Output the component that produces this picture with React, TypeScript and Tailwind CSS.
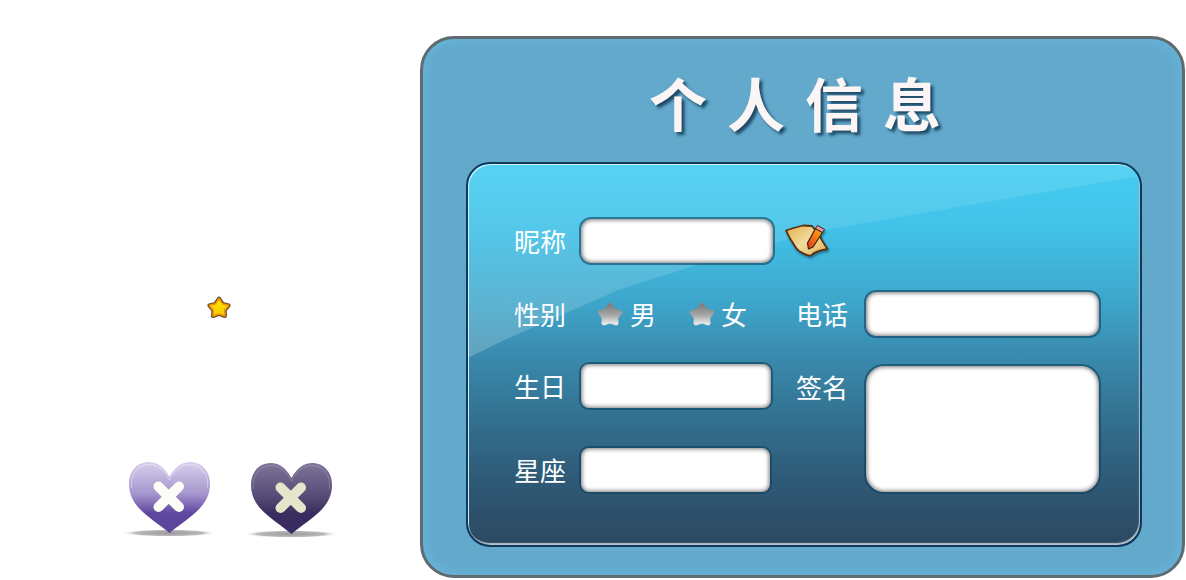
const cjk = "font-['Noto_Sans_CJK_SC','Noto_Sans',sans-serif]";
const fieldClass =
  'block border-2 border-[#0d3f5e]/60 bg-white bg-clip-padding shadow-[inset_0_0_4px_1px_#777777] outline-none';

function Star({ gray = false }: { gray?: boolean }) {
  const id = gray ? 'starGray' : 'starGold';
  const shape =
    'M13 3.5 L16.6 8.9 L22.6 10.4 L18.6 15.3 L19 21 L13 18.9 L7 21 L7.4 15.3 L3.4 10.4 L9.4 8.9 Z';
  return (
    <svg width="26" height="25" viewBox="0 0 26 25" className="block shrink-0">
      <defs>
        <linearGradient id={id} x1="0" y1="0" x2="0" y2="1">
          {gray ? (
            <>
              <stop offset="0%" stopColor="#808080" />
              <stop offset="55%" stopColor="#a6a6a6" />
              <stop offset="100%" stopColor="#e4e4e4" />
            </>
          ) : (
            <>
              <stop offset="0%" stopColor="#ffe800" />
              <stop offset="100%" stopColor="#fbc800" />
            </>
          )}
        </linearGradient>
      </defs>
      {gray ? (
        <path d={shape} fill={`url(#${id})`} stroke={`url(#${id})`} strokeWidth="5" strokeLinejoin="round" />
      ) : (
        <>
          <path d={shape} fill="#f09a00" stroke="#6e4a2a" strokeWidth="4" strokeLinejoin="round" />
          <path d={shape} fill={`url(#${id})`} stroke="#f09a00" strokeWidth="1.6" strokeLinejoin="round" />
        </>
      )}
    </svg>
  );
}

function Heart({ dark = false }: { dark?: boolean }) {
  const id = dark ? 'heartDark' : 'heartLight';
  return (
    <svg width="98" height="82" viewBox="0 0 98 82" className="block shrink-0">
      <defs>
        <linearGradient id={id} x1="0" y1="0" x2="0" y2="1">
          {dark ? (
            <>
              <stop offset="0%" stopColor="#7f7499" />
              <stop offset="45%" stopColor="#584d78" />
              <stop offset="72%" stopColor="#3a2c5e" />
              <stop offset="100%" stopColor="#3a2b60" />
            </>
          ) : (
            <>
              <stop offset="0%" stopColor="#d8d0ec" />
              <stop offset="45%" stopColor="#a595cd" />
              <stop offset="72%" stopColor="#5e479f" />
              <stop offset="100%" stopColor="#5a4498" />
            </>
          )}
        </linearGradient>
        <radialGradient id={`${id}Shadow`}>
          <stop offset="0%" stopColor="#999999" />
          <stop offset="70%" stopColor="#b8b8b8" />
          <stop offset="100%" stopColor="#ffffff" stopOpacity="0" />
        </radialGradient>
      </defs>
      <ellipse cx="49" cy="75" rx="48" ry="3.8" fill={`url(#${id}Shadow)`} />
      <path
        d="M49.5 19 C44 9 37 4 29 4 C17 4 9 13 9 26 C9 50 32 60 49.5 75 C67 60 90 50 90 26 C90 13 82 4 70 4 C62 4 55 9 49.5 19 Z"
        fill={`url(#${id})`}
      />
      <path
        d="M11.5 30 C10 16 18 6.5 29 6.5 C37 6.5 44 11 49.5 22 C55 11 62 6.5 70 6.5 C81 6.5 89 16 87.5 30"
        fill="none"
        stroke="#ffffff"
        strokeOpacity={dark ? 0.18 : 0.4}
        strokeWidth="1"
      />
      <path
        d="M38.5 28.5 L59 49 M59 28.5 L38.5 49"
        stroke={dark ? '#e4e6cc' : '#fdfdf8'}
        strokeWidth="10"
        strokeLinecap="round"
      />
    </svg>
  );
}

function ScrollPencil() {
  return (
    <svg width="44" height="34" viewBox="0 0 44 34" className="block shrink-0 drop-shadow-[1px_2px_1px_rgba(0,40,70,0.45)]">
      <defs>
        <linearGradient id="paper" x1="0" y1="0" x2="1" y2="1">
          <stop offset="0%" stopColor="#e6ae4c" />
          <stop offset="50%" stopColor="#f0dca0" />
          <stop offset="100%" stopColor="#e4ae50" />
        </linearGradient>
        <linearGradient id="pencil" x1="0" y1="1" x2="1" y2="0">
          <stop offset="0%" stopColor="#e8341c" />
          <stop offset="100%" stopColor="#fbb316" />
        </linearGradient>
      </defs>
      <path
        d="M1 6.5 C6 4.5 12 3 18 1.5 L27 2 L34 11 L38 18 L42.5 25 C36 26 30 27 26 31.5 C22 32 18 29 14 27 C10 24 9 20 6 16 C4 13 3 10 1 6.5 Z"
        fill="url(#paper)"
        stroke="#5a300c"
        strokeWidth="1.8"
        strokeLinejoin="round"
      />
      <path d="M30.5 4.5 L37.5 8.5 L28 23 L23.5 25 L22.5 19 Z" fill="url(#pencil)" stroke="#3e2412" strokeWidth="1.2" strokeLinejoin="round" />
      <path d="M30.5 4.5 L32.5 1.5 L39.5 5.5 L37.5 8.5 Z" fill="#ee9aa8" stroke="#3e2412" strokeWidth="1" strokeLinejoin="round" />
    </svg>
  );
}

function Label({ children }: { children: string }) {
  return <span className="block w-[53px] shrink-0 text-[26px] leading-none whitespace-nowrap text-white">{children}</span>;
}

export default function App() {
  return (
    <div className={`flex min-h-[580px] w-[1186px] overflow-hidden bg-white ${cjk}`}>
      {/* 左侧图标 */}
      <div className="w-[420px] shrink-0 pt-[295px]">
        <div className="pl-[206px]">
          <Star />
        </div>
        <div className="mt-[138px] flex items-start gap-[24px] pl-[120px]">
          <Heart />
          <div className="mt-[1px]">
            <Heart dark />
          </div>
        </div>
      </div>

      {/* 个人信息面板 */}
      <div className="mt-[36px] flex h-[542px] w-[765px] shrink-0 flex-col rounded-[34px] border-[3px] border-[#5f6b70] bg-[#63a9cc] shadow-[inset_0_0_14px_#6ab8de]">
        <h1 className="flex h-[123px] shrink-0 items-start justify-center pt-[28px] pl-[5px] text-[58px] leading-[70px] font-bold tracking-[20px] text-[#fbf6f5] [text-shadow:3px_3px_3px_#1d4a66]">
          个人信息
        </h1>

        <div className="relative ml-[43px] h-[385px] w-[676px] overflow-hidden rounded-[24px] border-2 border-[#0e3a5e] bg-[linear-gradient(180deg,#44cdf2_0%,#42c2e8_17%,#3ea6cb_36%,#3a8db0_49%,#33708f_67%,#2e5a77_83%,#2c4860_100%)] shadow-[inset_1px_1px_0_#cfeef8,inset_-1px_-2px_1px_#b4c0c8]">
          <div className="absolute inset-0 bg-[linear-gradient(180deg,rgba(255,255,255,0.1),rgba(255,255,255,0.1)_20%,rgba(255,255,255,0.2)_50%)] [clip-path:polygon(2px_193px,32px_178px,150px_126px,250px_94px,355px_66px,665px_13px,672px_12px,672px_0,0_0,0_193px)]" />

          <div className="relative flex flex-col pt-[53px] pl-[46px]">
            <div className="flex items-center">
              <Label>昵称</Label>
              <input className={`ml-[12px] h-[48px] w-[196px] rounded-[12px] ${fieldClass}`} />
              <div className="ml-[10px]">
                <ScrollPencil />
              </div>
            </div>

            <div className="mt-[25px] flex items-start">
              <div className="flex w-[282px] shrink-0 flex-col">
                <div className="flex h-[48px] items-center">
                  <Label>性别</Label>
                  <div className="ml-[30px]">
                    <Star gray />
                  </div>
                  <span className="ml-[7px] text-[26px] leading-none text-white">男</span>
                  <div className="ml-[33px]">
                    <Star gray />
                  </div>
                  <span className="ml-[6px] text-[26px] leading-none text-white">女</span>
                </div>
                <div className="mt-[24px] flex items-center">
                  <Label>生日</Label>
                  <input className={`ml-[12px] h-[48px] w-[194px] rounded-[10px] ${fieldClass}`} />
                </div>
                <div className="mt-[36px] flex items-center">
                  <Label>星座</Label>
                  <input className={`ml-[12px] h-[48px] w-[193px] rounded-[10px] ${fieldClass}`} />
                </div>
              </div>

              <div className="flex flex-col">
                <div className="flex items-center">
                  <Label>电话</Label>
                  <input className={`ml-[15px] h-[48px] w-[237px] rounded-[12px] ${fieldClass}`} />
                </div>
                <div className="mt-[26px] flex items-start">
                  <div className="pt-[10px]">
                    <Label>签名</Label>
                  </div>
                  <textarea className={`ml-[15px] h-[130px] w-[237px] resize-none rounded-[20px] ${fieldClass}`} />
                </div>
              </div>
            </div>
          </div>
        </div>
      </div>
    </div>
  );
}
